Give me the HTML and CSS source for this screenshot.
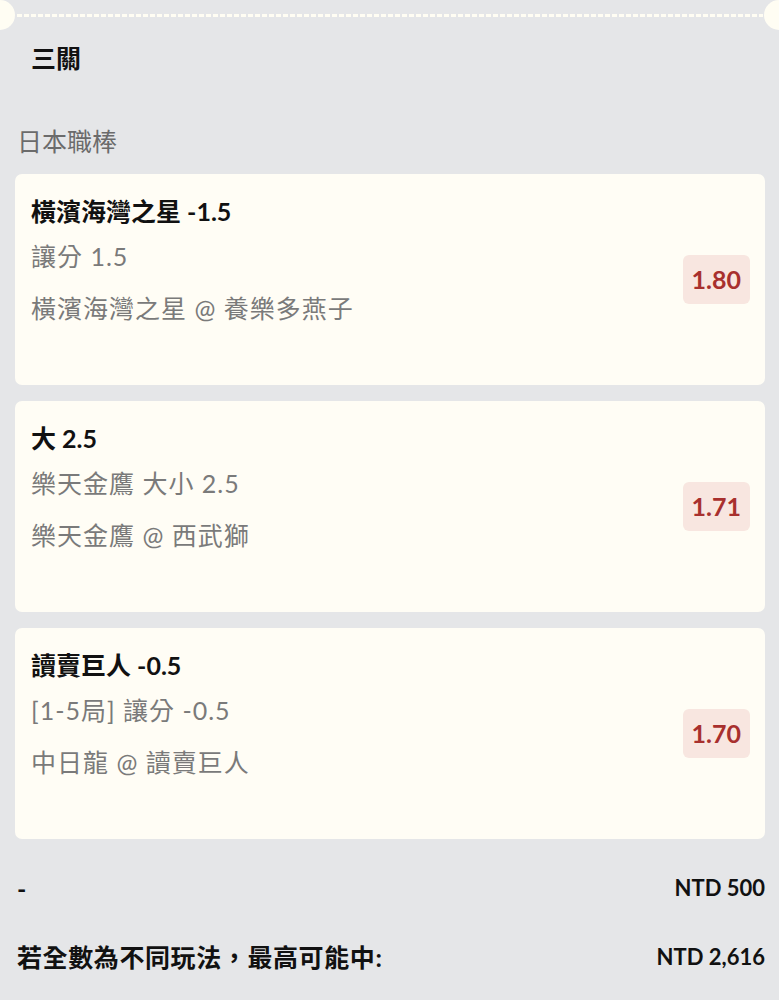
FILE: index.html
```html
<!DOCTYPE html>
<html lang="zh-Hant">
<head>
<meta charset="utf-8">
<link rel="stylesheet" href="styles.css">
</head>
<body>
<div class="perf">
  <span class="notch notch-left"></span>
  <span class="dashes"></span>
  <span class="notch notch-right"></span>
</div>
<div class="parlay-title">三關</div>
<div class="league">日本職棒</div>
<div class="cards">
  <div class="card">
    <div class="info">
      <div class="pick">橫濱海灣之星 -1.5</div>
      <div class="market">讓分 1.5</div>
      <div class="match">橫濱海灣之星 @ 養樂多燕子</div>
    </div>
    <div class="odds">1.80</div>
  </div>
  <div class="card">
    <div class="info">
      <div class="pick">大 2.5</div>
      <div class="market">樂天金鷹 大小 2.5</div>
      <div class="match">樂天金鷹 @ 西武獅</div>
    </div>
    <div class="odds">1.71</div>
  </div>
  <div class="card">
    <div class="info">
      <div class="pick">讀賣巨人 -0.5</div>
      <div class="market">[1-5局] 讓分 -0.5</div>
      <div class="match">中日龍 @ 讀賣巨人</div>
    </div>
    <div class="odds">1.70</div>
  </div>
</div>
<div class="summary-row stake">
  <span class="label">-</span>
  <span class="amount">NTD 500</span>
</div>
<div class="summary-row payout">
  <span class="label">若全數為不同玩法，最高可能中:</span>
  <span class="amount">NTD 2,616</span>
</div>
</body>
</html>
```

FILE: styles.css
```css
* { box-sizing: border-box; }
html, body {
  margin: 0;
  padding: 0;
  background: #e5e6e8;
}
body {
  font-family: Lato, "Noto Sans CJK TC", sans-serif;
  color: #111;
  width: 779px;
}
.perf {
  display: flex;
  align-items: center;
  height: 30px;
}
.notch {
  width: 15px;
  height: 30px;
  background: #fffdf3;
  flex: none;
}
.notch-left { border-radius: 0 15px 15px 0; }
.notch-right { border-radius: 15px 0 0 15px; }
.dashes {
  flex: 1;
  height: 3px;
  margin: 0 1px 0 2px;
  background: repeating-linear-gradient(90deg, #fffdf3 0 5px, transparent 5px 7px);
}
.parlay-title {
  margin-top: 11px;
  padding-left: 31px;
  font-size: 25px;
  line-height: 34px;
  font-weight: 700;
}
.league {
  margin-top: 49px;
  padding-left: 17px;
  font-size: 25px;
  line-height: 34px;
  color: #6b6b6b;
}
.cards {
  margin-top: 16px;
  padding: 0 14px 0 15px;
  display: flex;
  flex-direction: column;
  gap: 16px;
}
.card {
  height: 211px;
  background: #fffdf5;
  border-radius: 7px;
  padding: 0 15px 0 16px;
  display: flex;
  align-items: center;
  justify-content: space-between;
}
.info {
  align-self: flex-start;
  margin-top: 22px;
}
.pick {
  font-size: 25px;
  line-height: 30px;
  font-weight: 700;
  color: #111;
}
.market {
  margin-top: 15px;
  font-size: 25px;
  line-height: 30px;
  letter-spacing: 1px;
  color: #7a7a7a;
}
.match {
  margin-top: 22px;
  font-size: 25px;
  line-height: 30px;
  letter-spacing: 1px;
  color: #7a7a7a;
}
.odds {
  background: #f8e6e0;
  color: #a8302e;
  font-weight: 700;
  font-size: 25px;
  line-height: 31px;
  padding: 9px 9px;
  border-radius: 6px;
}
.summary-row {
  display: flex;
  justify-content: space-between;
  align-items: center;
  padding: 0 14px 0 17px;
  line-height: 34px;
  font-weight: 700;
  color: #111;
}
.label {
  font-size: 25px;
  letter-spacing: 0.6px;
}
.amount {
  font-size: 22px;
}
.stake { margin-top: 32px; }
.payout { margin-top: 35px; }
```
